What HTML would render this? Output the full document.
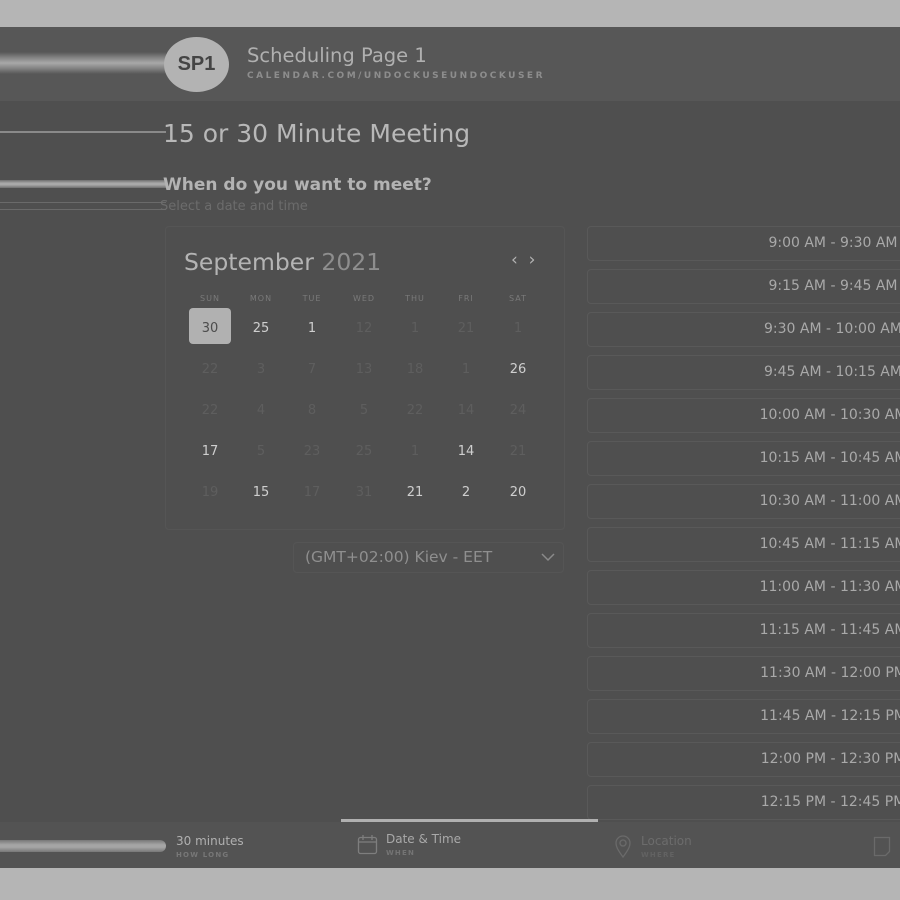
<!DOCTYPE html>
<html><head><meta charset="utf-8"><style>
*{margin:0;padding:0;box-sizing:border-box}
body{width:900px;height:900px;background:#b5b5b5;position:relative;overflow:hidden;font-family:"DejaVu Sans","Liberation Sans",sans-serif}
.a{position:absolute}
#main{left:0;top:27px;width:900px;height:841px;background:#4f4f4f}
#hdr{left:0;top:27px;width:900px;height:74px;background:#575757}
#ftr{left:0;top:822px;width:900px;height:46px;background:#535353}
.t{position:absolute;white-space:nowrap}
.slot{position:absolute;left:587px;width:492px;height:35px;border:1px solid #595959;border-radius:4px;background:#4f4f4f;color:#a9a9a9;font-size:14px;text-align:center;line-height:33px}
.d{position:absolute;width:40px;text-align:center;font-size:13px;color:#5e5e5e;transform:translateX(-20px)}
.d.on{color:#cfcfcf}
.h{position:absolute;width:40px;text-align:center;font-size:8px;letter-spacing:1px;color:#7a7a7a;transform:translateX(-20px)}
</style></head><body>
<div class="a" id="main"></div>
<div class="a" id="hdr"></div>
<div class="a" id="ftr"></div>
<div class="a" style="left:0;top:52px;width:166px;height:22px;background:linear-gradient(#575757,#8a8a8a 30%,#a8a8a8 50%,#8a8a8a 70%,#575757)"></div>
<div class="a" style="left:0;top:131px;width:166px;height:2px;background:#8a8a8a"></div>
<div class="a" style="left:0;top:180px;width:166px;height:8px;background:linear-gradient(#6f6f6f,#a9a9a9 40%,#a9a9a9 60%,#6f6f6f)"></div>
<div class="a" style="left:0;top:202px;width:166px;height:1px;background:#6a6a6a"></div>
<div class="a" style="left:0;top:209px;width:166px;height:1px;background:#6a6a6a"></div>
<div class="a" style="left:0;top:840px;width:166px;height:12px;border-radius:0 6px 6px 0;background:linear-gradient(#777,#a5a5a5 40%,#a5a5a5 60%,#777)"></div>

<div class="a" style="left:164px;top:37px;width:65px;height:55px;border-radius:50%;background:#b3b3b3;color:#444;font-size:20px;font-weight:bold;text-align:center;line-height:55px;font-family:'Liberation Sans',sans-serif">SP1</div>
<div class="t" style="left:247px;top:44px;font-size:19.5px;color:#b0b0b0">Scheduling Page 1</div>
<div class="t" style="left:247px;top:71px;font-size:9px;font-weight:bold;letter-spacing:2.5px;color:#8d8d8d">CALENDAR.COM/UNDOCKUSEUNDOCKUSER</div>
<div class="t" style="left:163px;top:119px;font-size:25px;color:#b8b8b8">15 or 30 Minute Meeting</div>
<div class="t" style="left:163px;top:175px;font-size:17px;font-weight:bold;color:#b3b3b3">When do you want to meet?</div>
<div class="t" style="left:160px;top:199px;font-size:13px;color:#6c6c6c">Select a date and time</div>

<div class="a" style="left:165px;top:226px;width:400px;height:304px;border:1px solid #555;border-radius:4px"></div>
<div class="t" style="left:184px;top:248px;font-size:23.5px;color:#b4b4b4">September <span style="color:#8e8e8e">2021</span></div>
<div class="t" style="left:511px;top:250px;font-size:17px;color:#b4b4b4">‹&nbsp;&nbsp;›</div>
<div class="h" style="left:210px;top:294px">SUN</div><div class="h" style="left:261px;top:294px">MON</div><div class="h" style="left:312px;top:294px">TUE</div><div class="h" style="left:364px;top:294px">WED</div><div class="h" style="left:415px;top:294px">THU</div><div class="h" style="left:466px;top:294px">FRI</div><div class="h" style="left:518px;top:294px">SAT</div>
<div class="a" style="left:189px;top:308px;width:42px;height:36px;border-radius:4px;background:#b1b1b1"></div>
<div class="d" style="left:210px;top:321px;color:#4c4c4c">30</div><div class="d on" style="left:261px;top:321px">25</div><div class="d on" style="left:312px;top:321px">1</div><div class="d" style="left:364px;top:321px">12</div><div class="d" style="left:415px;top:321px">1</div><div class="d" style="left:466px;top:321px">21</div><div class="d" style="left:518px;top:321px">1</div>
<div class="d" style="left:210px;top:362px">22</div><div class="d" style="left:261px;top:362px">3</div><div class="d" style="left:312px;top:362px">7</div><div class="d" style="left:364px;top:362px">13</div><div class="d" style="left:415px;top:362px">18</div><div class="d" style="left:466px;top:362px">1</div><div class="d on" style="left:518px;top:362px">26</div>
<div class="d" style="left:210px;top:403px">22</div><div class="d" style="left:261px;top:403px">4</div><div class="d" style="left:312px;top:403px">8</div><div class="d" style="left:364px;top:403px">5</div><div class="d" style="left:415px;top:403px">22</div><div class="d" style="left:466px;top:403px">14</div><div class="d" style="left:518px;top:403px">24</div>
<div class="d on" style="left:210px;top:444px">17</div><div class="d" style="left:261px;top:444px">5</div><div class="d" style="left:312px;top:444px">23</div><div class="d" style="left:364px;top:444px">25</div><div class="d" style="left:415px;top:444px">1</div><div class="d on" style="left:466px;top:444px">14</div><div class="d" style="left:518px;top:444px">21</div>
<div class="d" style="left:210px;top:485px">19</div><div class="d on" style="left:261px;top:485px">15</div><div class="d" style="left:312px;top:485px">17</div><div class="d" style="left:364px;top:485px">31</div><div class="d on" style="left:415px;top:485px">21</div><div class="d on" style="left:466px;top:485px">2</div><div class="d on" style="left:518px;top:485px">20</div>

<div class="a" style="left:293px;top:542px;width:271px;height:31px;border:1px solid #555;border-radius:4px"></div>
<div class="t" style="left:305px;top:548px;font-size:15.5px;color:#8f8f8f">(GMT+02:00) Kiev - EET</div>
<svg class="a" style="left:541px;top:552px" width="14" height="10"><path d="M1 2 L7 8 L13 2" fill="none" stroke="#8a8a8a" stroke-width="1.5"/></svg>

<div class="slot" style="top:226px">9:00 AM - 9:30 AM</div>
<div class="slot" style="top:269px">9:15 AM - 9:45 AM</div>
<div class="slot" style="top:312px">9:30 AM - 10:00 AM</div>
<div class="slot" style="top:355px">9:45 AM - 10:15 AM</div>
<div class="slot" style="top:398px">10:00 AM - 10:30 AM</div>
<div class="slot" style="top:441px">10:15 AM - 10:45 AM</div>
<div class="slot" style="top:484px">10:30 AM - 11:00 AM</div>
<div class="slot" style="top:527px">10:45 AM - 11:15 AM</div>
<div class="slot" style="top:570px">11:00 AM - 11:30 AM</div>
<div class="slot" style="top:613px">11:15 AM - 11:45 AM</div>
<div class="slot" style="top:656px">11:30 AM - 12:00 PM</div>
<div class="slot" style="top:699px">11:45 AM - 12:15 PM</div>
<div class="slot" style="top:742px">12:00 PM - 12:30 PM</div>
<div class="slot" style="top:785px">12:15 PM - 12:45 PM</div>

<div class="a" style="left:341px;top:819px;width:257px;height:3px;background:#b0b0b0"></div>
<div class="t" style="left:176px;top:834px;font-size:12px;color:#b0b0b0">30 minutes</div>
<div class="t" style="left:176px;top:851px;font-size:7px;letter-spacing:1.2px;font-weight:bold;color:#777">HOW LONG</div>
<svg class="a" style="left:357px;top:834px" width="22" height="22"><rect x="1.5" y="3.5" width="18" height="16" rx="2" fill="none" stroke="#7e7e7e" stroke-width="1.3"/><path d="M1.5 8h18M6 1v5M15 1v5" stroke="#7e7e7e" stroke-width="1.3"/></svg>
<div class="t" style="left:386px;top:832px;font-size:12px;color:#a9a9a9">Date &amp; Time</div>
<div class="t" style="left:386px;top:849px;font-size:7px;letter-spacing:1.2px;font-weight:bold;color:#747474">WHEN</div>
<svg class="a" style="left:614px;top:835px" width="18" height="24"><path d="M9 22 C3 14 2 11 2 8 A7 7 0 0 1 16 8 C16 11 15 14 9 22Z M9 5a3 3 0 1 0 0.01 0" fill="none" stroke="#6a6a6a" stroke-width="1.3"/></svg>
<div class="t" style="left:641px;top:834px;font-size:12px;color:#6c6c6c">Location</div>
<div class="t" style="left:641px;top:851px;font-size:7px;letter-spacing:1.2px;font-weight:bold;color:#626262">WHERE</div>
<svg class="a" style="left:873px;top:836px" width="20" height="22"><path d="M1.5 1.5h15v14l-4 4h-11z" fill="none" stroke="#6a6a6a" stroke-width="1.3"/></svg>
</body></html>
